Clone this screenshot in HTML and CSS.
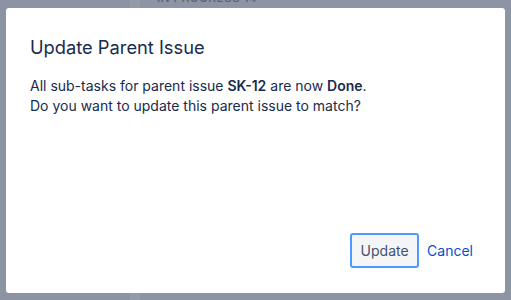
FILE: index.html
```html
<!DOCTYPE html>
<html lang="en">
<head>
<meta charset="utf-8">
<title>Update Parent Issue</title>
<link rel="stylesheet" href="styles.css">
</head>
<body>
<div class="board">
  <div class="sidebar"></div>
  <div class="divider"></div>
  <div class="columns">
    <div class="col-title">IN PROGRESS 14</div>
  </div>
</div>
<div class="modal" role="dialog" aria-labelledby="modal-title">
  <div class="modal-body">
    <h1 id="modal-title" class="modal-title">Update Parent Issue</h1>
    <p class="modal-text">All sub-tasks for parent issue <strong>SK-12</strong> are now <strong>Done</strong>.<br>Do you want to update this parent issue to match?</p>
  </div>
  <div class="modal-footer">
    <button class="btn btn-default" type="button">Update</button>
    <button class="btn btn-link" type="button">Cancel</button>
  </div>
</div>
</body>
</html>
```
FILE: styles.css
```css
* { box-sizing: border-box; }
html, body {
  margin: 0;
  height: 300px;
  overflow: hidden;
}
body {
  font-family: Inter, "Noto Sans", "Liberation Sans", sans-serif;
  background: #8d94a3;
  color: #172b4d;
}
.board {
  display: flex;
  height: 300px;
}
.sidebar {
  width: 130px;
  background: #8c93a2;
}
.divider {
  width: 10px;
  background: #939aa8;
}
.columns {
  flex: 1;
  background: #8d94a3;
  padding-left: 17px;
}
.col-title {
  margin-top: -9px;
  font-size: 12px;
  line-height: 14px;
  letter-spacing: 0.3px;
  color: #5c6476;
  font-weight: 500;
}
.modal {
  position: absolute;
  left: 6px;
  top: 8px;
  width: 499px;
  height: 285px;
  background: #ffffff;
  border-radius: 3px;
  display: flex;
  flex-direction: column;
}
.modal-body {
  flex: 1;
  padding: 27px 24px 0 24px;
}
.modal-title {
  margin: 0;
  font-size: 18.3px;
  line-height: 24px;
  font-weight: 400;
  color: #172b4d;
}
.modal-text {
  margin: 17px 0 0 0;
  font-size: 14px;
  line-height: 20px;
  color: #172b4d;
}
.modal-text strong {
  font-weight: 600;
}
.modal-footer {
  display: flex;
  justify-content: flex-end;
  align-items: center;
  padding: 0 24px 25px 24px;
}
.btn {
  font-family: inherit;
  font-size: 14px;
  height: 35px;
  border-radius: 3px;
  cursor: pointer;
}
.btn-default {
  width: 69px;
  border: 2px solid #4c9aff;
  background: #f4f5f7;
  color: #42526e;
  padding: 0;
}
.btn-link {
  border: 0;
  background: transparent;
  color: #0052cc;
  padding: 0 8px;
}
```
